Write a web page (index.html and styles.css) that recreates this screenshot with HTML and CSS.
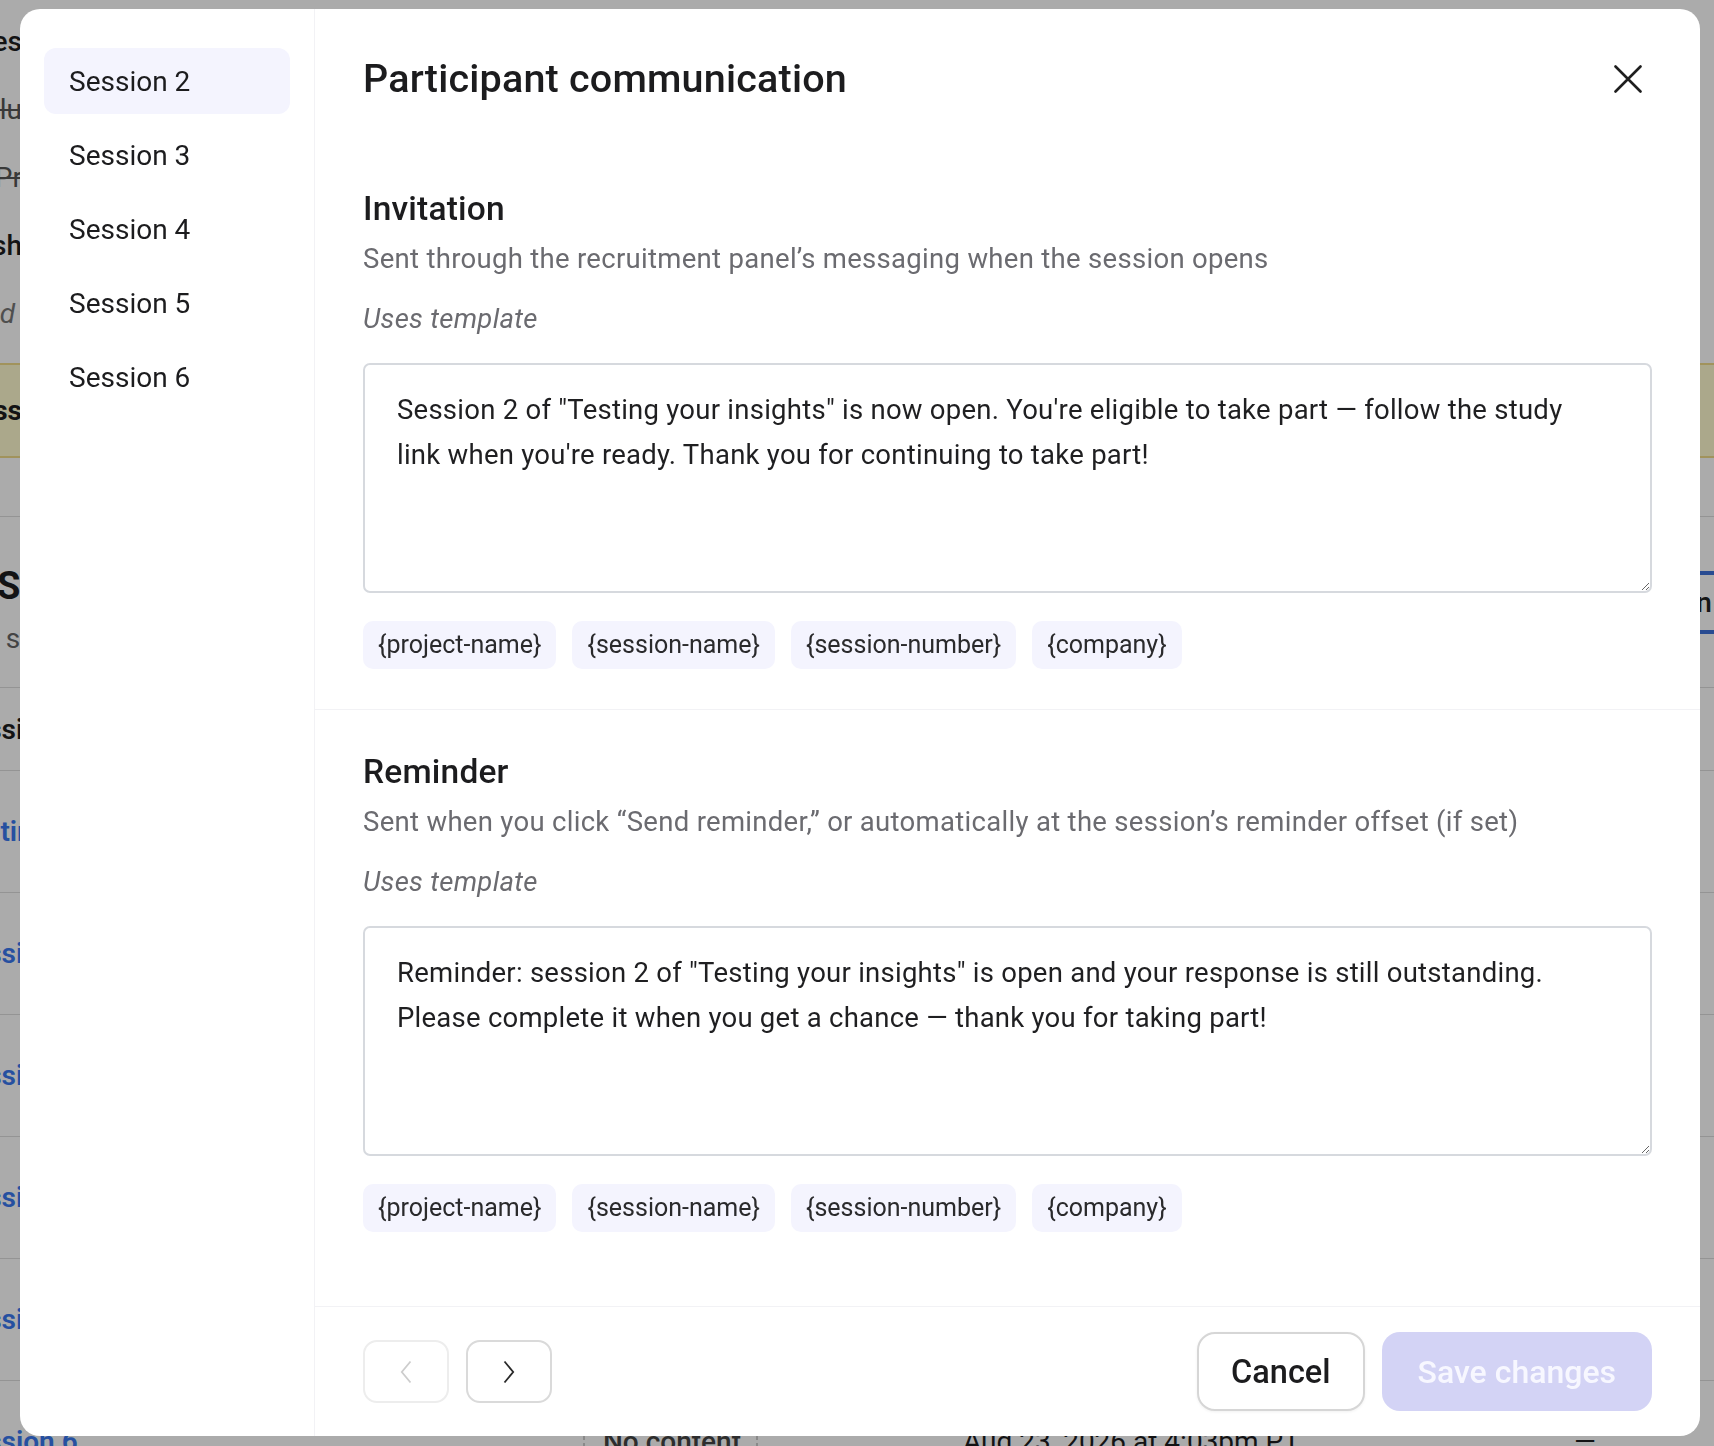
FILE: index.html
```html
<!DOCTYPE html>
<html lang="en">
<head>
    <meta charset="UTF-8">
    <meta name="viewport" content="width=device-width, initial-scale=1.0">
    <title>Participant communication</title>
    <link rel="stylesheet" href="styles.css">
</head>
<body>

<!-- study page underneath the dialog -->
<div class="page">
    <ul class="outline">
        <li class="outline-item strong">Notes</li>
        <li class="outline-item struck">Flu</li>
        <li class="outline-item struck">Pr</li>
        <li class="outline-item strong">Push</li>
        <li class="outline-item soft">Saved</li>
    </ul>

    <div class="banner"><span class="banner-text">Unless</span></div>
    <div class="page-rule"></div>

    <div class="sessions-head">
        <div class="sessions-title">
            <h1>Sessions</h1>
            <p class="sessions-sub">Upcoming se</p>
        </div>
        <button class="outline-btn">Add session</button>
    </div>

    <div class="table">
        <div class="t-row t-head">
            <div class="t-cell">Session</div>
            <div class="t-cell">Content</div>
            <div class="t-cell"></div>
            <div class="t-cell">Opens</div>
            <div class="t-cell"></div>
        </div>
        <div class="t-row">
            <div class="t-cell t-link">Testing your insights</div>
            <div class="t-cell t-tag">No content</div>
            <div class="t-cell"></div>
            <div class="t-cell">Aug 18, 2026 at 4:03pm PT</div>
            <div class="t-cell">—</div>
        </div>
        <div class="t-row">
            <div class="t-cell t-link">Session 2</div>
            <div class="t-cell t-tag">No content</div>
            <div class="t-cell"></div>
            <div class="t-cell">Aug 19, 2026 at 4:03pm PT</div>
            <div class="t-cell">—</div>
        </div>
        <div class="t-row">
            <div class="t-cell t-link">Session 3</div>
            <div class="t-cell t-tag">No content</div>
            <div class="t-cell"></div>
            <div class="t-cell">Aug 20, 2026 at 4:03pm PT</div>
            <div class="t-cell">—</div>
        </div>
        <div class="t-row">
            <div class="t-cell t-link">Session 4</div>
            <div class="t-cell t-tag">No content</div>
            <div class="t-cell"></div>
            <div class="t-cell">Aug 21, 2026 at 4:03pm PT</div>
            <div class="t-cell">—</div>
        </div>
        <div class="t-row">
            <div class="t-cell t-link">Session 5</div>
            <div class="t-cell t-tag">No content</div>
            <div class="t-cell"></div>
            <div class="t-cell">Aug 22, 2026 at 4:03pm PT</div>
            <div class="t-cell">—</div>
        </div>
        <div class="t-row">
            <div class="t-cell t-link">Session 6</div>
            <div class="t-cell t-tag">No content</div>
            <div class="t-cell"></div>
            <div class="t-cell">Aug 23, 2026 at 4:03pm PT</div>
            <div class="t-cell">—</div>
        </div>
    </div>
</div>

<div class="backdrop">
    <div class="modal" role="dialog" aria-labelledby="dialogTitle">
        <nav class="session-nav">
            <button class="session-link active">Session 2</button>
            <button class="session-link">Session 3</button>
            <button class="session-link">Session 4</button>
            <button class="session-link">Session 5</button>
            <button class="session-link">Session 6</button>
        </nav>

        <div class="modal-main">
            <header class="modal-header">
                <h2 class="modal-title" id="dialogTitle">Participant communication</h2>
                <button class="close-btn" aria-label="Close">
                    <svg width="28" height="28" viewBox="0 0 28 28" fill="none" stroke="currentColor" stroke-width="2.6" stroke-linecap="round">
                        <path d="M1.5 1.5L26.5 26.5M26.5 1.5L1.5 26.5"/>
                    </svg>
                </button>
            </header>

            <div class="modal-body">
                <section class="message-block">
                    <h3>Invitation</h3>
                    <p class="message-hint">Sent through the recruitment panel’s messaging when the session opens</p>
                    <p class="message-template">Uses template</p>
                    <textarea class="message-text">Session 2 of "Testing your insights" is now open. You're eligible to take part — follow the study link when you're ready. Thank you for continuing to take part!</textarea>
                    <div class="tokens">
                        <span class="token">{project-name}</span>
                        <span class="token">{session-name}</span>
                        <span class="token">{session-number}</span>
                        <span class="token">{company}</span>
                    </div>
                </section>

                <section class="message-block">
                    <h3>Reminder</h3>
                    <p class="message-hint">Sent when you click “Send reminder,” or automatically at the session’s reminder offset (if set)</p>
                    <p class="message-template">Uses template</p>
                    <textarea class="message-text">Reminder: session 2 of "Testing your insights" is open and your response is still outstanding. Please complete it when you get a chance — thank you for taking part!</textarea>
                    <div class="tokens">
                        <span class="token">{project-name}</span>
                        <span class="token">{session-name}</span>
                        <span class="token">{session-number}</span>
                        <span class="token">{company}</span>
                    </div>
                </section>
            </div>

            <footer class="modal-footer">
                <div class="pager">
                    <button class="pager-btn" disabled aria-label="Previous session">
                        <svg width="12" height="24" viewBox="0 0 12 24" fill="none" stroke="currentColor" stroke-width="1.8">
                            <path d="M10.5 1.5L1.8 12l8.7 10.5"/>
                        </svg>
                    </button>
                    <button class="pager-btn" aria-label="Next session">
                        <svg width="12" height="24" viewBox="0 0 12 24" fill="none" stroke="currentColor" stroke-width="1.8">
                            <path d="M1.5 1.5L10.2 12 1.5 22.5"/>
                        </svg>
                    </button>
                </div>
                <div class="actions">
                    <button class="btn btn-cancel">Cancel</button>
                    <button class="btn btn-save" disabled>Save changes</button>
                </div>
            </footer>
        </div>
    </div>
</div>

</body>
</html>
```

FILE: styles.css
```css
* {
    box-sizing: border-box;
    margin: 0;
    padding: 0;
}

body {
    font-family: Roboto, "Liberation Sans", sans-serif;
    color: #1d1d1f;
    background: #fff;
    height: 100vh;
    overflow: hidden;
}

button {
    font-family: inherit;
    cursor: pointer;
}

/* ---- page behind the dialog ---- */

.page {
    height: 100vh;
    overflow: hidden;
    padding-top: 8px;
    font-size: 28px;
}

.outline {
    list-style: none;
    width: 300px;
    margin-left: -278px;
    text-align: right;
}

.outline-item {
    height: 68px;
    line-height: 68px;
    white-space: nowrap;
}

.outline-item.strong {
    font-weight: 500;
}

.outline-item.struck {
    color: #555;
    text-decoration: line-through;
}

.outline-item.soft {
    padding-right: 7px;
    color: #777;
    font-style: italic;
}

.banner {
    height: 95px;
    margin-top: 15px;
    background: #fffbd0;
    border-top: 2px solid #f1dc8a;
    border-bottom: 2px solid #f1dc8a;
    display: flex;
    align-items: center;
}

.banner-text {
    width: 300px;
    margin-left: -278px;
    text-align: right;
    font-weight: 700;
}

.page-rule {
    height: 59px;
    border-bottom: 1px solid #ddd;
}

.sessions-head {
    height: 171px;
    display: flex;
    justify-content: space-between;
    align-items: center;
    border-bottom: 1px solid #ddd;
}

.sessions-title {
    align-self: flex-start;
    padding-top: 45px;
}

.sessions-title h1 {
    margin-left: -3px;
    font-size: 38px;
    font-weight: 700;
    line-height: 48px;
}

.sessions-sub {
    width: 313px;
    margin-top: 9px;
    margin-left: -278px;
    text-align: right;
    color: #666;
    line-height: 40px;
    white-space: nowrap;
}

.outline-btn {
    width: 260px;
    height: 63px;
    margin-right: -100px;
    padding-right: 101px;
    border: 4px solid #3d70d8;
    border-radius: 10px;
    background: #fff;
    font-size: 28px;
    font-weight: 500;
    text-align: right;
    white-space: nowrap;
    color: #222;
}

.table {
    margin-left: -45px;
}

.t-row {
    display: grid;
    grid-template-columns: 628px 175px 187px 611px 1fr;
    align-items: center;
    height: 122px;
    border-bottom: 1px solid #ddd;
}

.t-head {
    height: 83px;
    font-weight: 600;
}

.t-cell {
    padding-left: 18px;
    white-space: nowrap;
}

.t-cell:first-child {
    padding-left: 0;
}

.t-link {
    color: #3a78ef;
    font-weight: 600;
}

.t-tag {
    border-left: 2px dashed #ccc;
    border-right: 2px dashed #ccc;
    color: #444;
    font-weight: 500;
}

/* ---- dialog ---- */

.backdrop {
    position: fixed;
    inset: 0;
    display: flex;
    padding: 9px 14px 10px 20px;
    background: rgba(0, 0, 0, 0.33);
}

.modal {
    flex: 1;
    display: flex;
    background: #fff;
    border-radius: 20px;
    overflow: hidden;
}

.session-nav {
    width: 295px;
    flex-shrink: 0;
    display: flex;
    flex-direction: column;
    gap: 8px;
    padding: 39px 24px;
    border-right: 1px solid #f2f2f5;
}

.session-link {
    height: 66px;
    padding-left: 25px;
    border: none;
    border-radius: 12px;
    background: none;
    text-align: left;
    font-size: 28px;
    color: #1c1c1e;
}

.session-link.active {
    background: #f4f4fe;
}

.modal-main {
    flex: 1;
    min-width: 0;
    display: flex;
    flex-direction: column;
}

.modal-header {
    display: flex;
    justify-content: space-between;
    align-items: center;
    padding: 48px 48px 46px;
}

.modal-title {
    font-size: 39.5px;
    font-weight: 500;
    line-height: 44px;
    letter-spacing: 0.2px;
    color: #1c1c1e;
}

.close-btn {
    width: 44px;
    height: 44px;
    margin-right: 2px;
    display: flex;
    align-items: center;
    justify-content: center;
    border: none;
    background: none;
    color: #1f1f1f;
}

.modal-body {
    flex: 1;
}

.message-block {
    padding: 42px 48px 40px;
    border-bottom: 1px solid #f2f2f5;
}

.message-block:last-child {
    border-bottom: none;
}

.message-block h3 {
    font-size: 33.5px;
    font-weight: 500;
    line-height: 40px;
    letter-spacing: 0.2px;
    color: #1c1c1e;
}

.message-hint {
    margin-top: 12px;
    font-size: 27.5px;
    line-height: 36px;
    letter-spacing: 0.3px;
    color: #6b6b70;
}

.message-template {
    margin-top: 24px;
    font-size: 27.5px;
    font-style: italic;
    line-height: 36px;
    letter-spacing: 0.3px;
    color: #6b6b70;
}

.message-text {
    display: block;
    width: 100%;
    height: 230px;
    margin-top: 26px;
    padding: 22px 44px 22px 32px;
    border: 2px solid #d6d9de;
    border-radius: 7px;
    font-family: inherit;
    font-size: 27.5px;
    line-height: 45px;
    letter-spacing: 0.25px;
    color: #1f1f21;
    resize: vertical;
    outline: none;
}

.tokens {
    display: flex;
    gap: 16px;
    margin-top: 28px;
}

.token {
    height: 48px;
    padding: 0 15px;
    line-height: 48px;
    border-radius: 10px;
    background: #f4f4fe;
    font-size: 25px;
    color: #2a2a2c;
}

.modal-footer {
    display: flex;
    justify-content: space-between;
    align-items: center;
    padding: 25px 48px;
    border-top: 1px solid #f2f2f5;
}

.pager {
    display: flex;
    gap: 17px;
}

.pager-btn {
    width: 86px;
    height: 63px;
    display: flex;
    align-items: center;
    justify-content: center;
    border: 2px solid #dadada;
    border-radius: 14px;
    background: #fff;
    color: #2a2a2a;
}

.pager-btn:disabled {
    border-color: #ededed;
    color: #cdcdcd;
    cursor: default;
}

.actions {
    display: flex;
    gap: 17px;
}

.btn {
    height: 79px;
    padding: 0 32px;
    border-radius: 18px;
    font-size: 32.5px;
    font-weight: 500;
}

.btn-cancel {
    border: 2px solid #d6d6d6;
    background: #fff;
    color: #1c1c1e;
    box-shadow: 0 1px 3px rgba(0, 0, 0, 0.06);
}

.btn-save {
    padding: 0 36px;
    border: none;
    background: #d3d3f5;
    color: #f7f7ff;
    font-size: 32px;
    cursor: default;
}
```
